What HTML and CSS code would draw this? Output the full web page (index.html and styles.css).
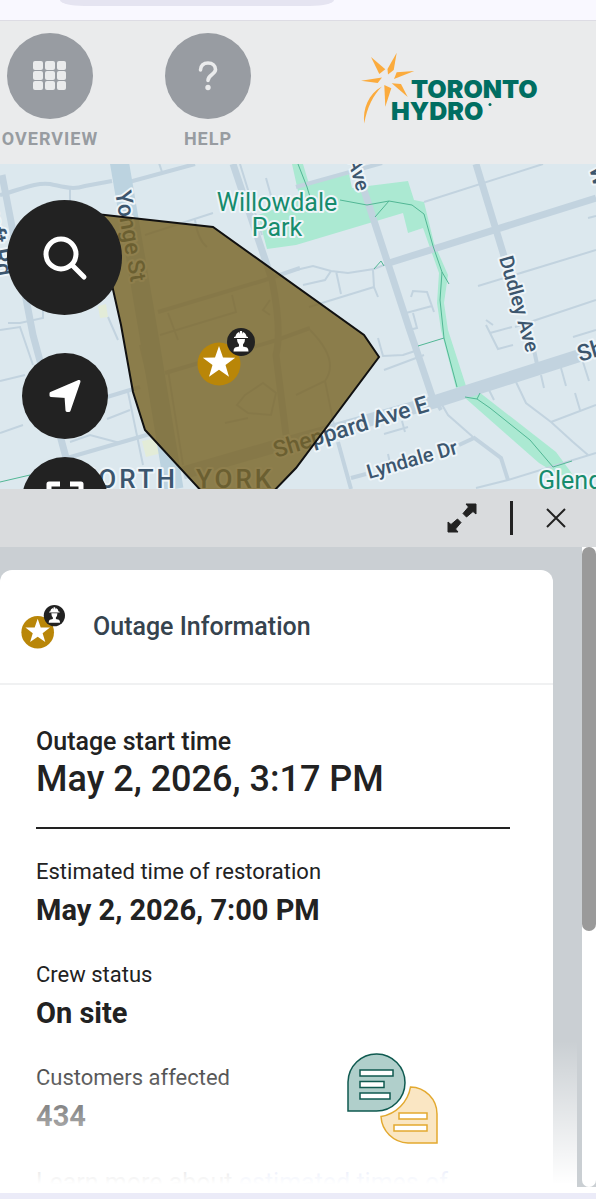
FILE: index.html
```
<!DOCTYPE html>
<html lang="en">
<head>
<meta charset="UTF-8">
<meta name="viewport" content="width=device-width, initial-scale=1.0">
<title>Outage Map</title>
<link rel="stylesheet" href="styles.css">
</head>
<body>
    <!-- shared icons -->
    <svg class="icon-defs" aria-hidden="true">
        <symbol id="outage-marker" viewBox="0 0 58 58">
            <circle cx="22" cy="36" r="21.5" fill="#b98608"/>
            <path d="M22 18L26 29.5L38.2 29.7L28.5 37.1L32 48.8L22 41.8L12 48.8L15.5 37.1L5.8 29.7L18 29.5Z" fill="#fff"/>
            <circle cx="44" cy="14" r="14" fill="#222"/>
            <path d="M38.500 8.500Q39 5 42 4L42.500 6L43 3H45L45.500 6L46 4Q49 5 49.500 8.500L51 9V10H37V9Z" fill="#fff"/>
            <path d="M40 11H48Q48 15 46 16.500V18.500L50 19.500Q51.500 20.500 51.500 23.500H36.500Q36.500 20.500 38 19.500L42 18.500V16.500Q40 15 40 11Z" fill="#fff"/>
        </symbol>
    </svg>

    <div class="browser-bar"><div class="address"></div></div>

    <header>
        <nav>
            <button class="nav-item">
                <span class="nav-icon">
                    <svg width="34" height="30" viewBox="0 0 34 30" fill="#eaebec">
                        <rect x="0" y="0" width="10" height="9" rx="2"/><rect x="12" y="0" width="10" height="9" rx="2"/><rect x="24" y="0" width="9" height="9" rx="2"/>
                        <rect x="0" y="10" width="10" height="9" rx="2"/><rect x="12" y="10" width="10" height="9" rx="2"/><rect x="24" y="10" width="9" height="9" rx="2"/>
                        <rect x="0" y="20" width="10" height="9" rx="2"/><rect x="12" y="20" width="10" height="9" rx="2"/><rect x="24" y="20" width="9" height="9" rx="2"/>
                    </svg>
                </span>
                OVERVIEW
            </button>
            <button class="nav-item">
                <span class="nav-icon">
                    <svg width="20" height="30" viewBox="0 0 20 30">
                        <path d="M2.500 9C2.500 4.500 5.500 2 10 2C14.500 2 17.500 4.500 17.500 8.500C17.500 13.500 10 13.500 10 19.500" fill="none" stroke="#eaebec" stroke-width="3.600" stroke-linecap="round"/>
                        <circle cx="10" cy="26.500" r="2.700" fill="#eaebec"/>
                    </svg>
                </span>
                HELP
            </button>
        </nav>
        <a href="#" class="logo" aria-label="Toronto Hydro">
            <svg width="184" height="74" viewBox="360 51 184 74">
                <g fill="#fbab3d">
                    <path d="M371 57L385.300 69.300L379.300 74Z"/>
                    <path d="M396.700 52.700L393.700 70L388 74.500L387.500 69Z"/>
                    <path d="M414.300 71L394 79L396.700 72.300Z"/>
                    <path d="M407.700 97L391.700 83.300L401 84Z"/>
                    <path d="M385.300 106.700L384.300 85L391.300 88.300Z"/>
                    <path d="M361 80.700L382 77.500L377.700 83Z"/>
                    <path d="M364.300 123.500C362.500 109 368.500 93.500 382 86.500C373.500 95 367 107 364.300 123.500Z"/>
                </g>
                <g class="logo-text">
                    <text x="411" y="98">TORONTO</text>
                    <text x="391" y="120">HYDRO</text>
                </g>
                <circle cx="490" cy="104.500" r="1.500" fill="#006e62"/>
            </svg>
        </a>
    </header>

    <main class="map">
        <svg class="map-canvas" viewBox="0 164 596 325" preserveAspectRatio="xMinYMin slice">
            <!-- parks -->
            <g fill="#abe9d2">
                <path d="M292 164H303L309 184L349 174L352 188L408 181L414 200L424 202L434 243L448 275L444 303L448 330L466 386L456 388L441 330L437 303L439 273L423 228L408 233L403 213L296 245L267 249L258 215L300 200Z"/>
                <path d="M464 397L479 392L556 452L573 475H559L539 463Z"/>
            </g>
            <path d="M142 441L158 438L162 453L146 457Z M98 306L106 304L108 317L100 318Z" fill="#e3ecd8"/>

            <!-- roads -->
            <g class="road minor">
                <path d="M70 189V210M158 160L162 172M145 235L213 213M195 220Q198 240 207 247M266 178L273 203M240 164L262 235"/>
                <path d="M424 202L543 164M303 285L325 280L331 271M296 270L313 266L331 271L348 273L374 269L389 263M373 270L374 287L378 297M374 287L309 307M336 271L341 294"/>
                <path d="M411 297L413 291L427 292L434 312M406 313L432 306M413 313L417 328L409 330M478 286L596 250M515 327L596 300M493 325L486 320M588 218L596 216"/>
                <path d="M441 403L448 415L473 437M516 382L526 403L551 422L573 442L588 455M551 422L596 405M508 480L596 453M476 488L508 480"/>
                <path d="M541 375L544 388M561 368L566 386M583 362L589 381M575 393L580 410M489 390L494 400M486 325L498 349L513 345M490 333L512 327M573 337L596 330"/>
                <path d="M378 338L383 356L403 355L418 350M384 370L424 355M384 434L408 427M402 421L405 432M388 454L391 468"/>
                <path d="M0 381L25 375M0 433L23 425M0 330L20 327L33 365M8 323H20L43 318L43 308M128 392L143 465M108 317L118 340M70 442L90 435L120 443M107 419L130 410"/>
                <path d="M168 313L178 340M232 295L236 312L160 335M245 395L263 383L276 393L271 415L248 413L237 405ZM225 423L248 418M270 300L263 310L270 315M310 330Q340 360 325 381L296 395M325 381L337 440M160 430L140 345M168 370L183 465"/>
            </g>
            <g class="road street">
                <path d="M0 195C20 190 35 182 50 184C65 187 72 190 85 186L112 181M129 182L195 164M296 187L382 163M158 312L265 280L300 268M165 373L277 340L310 328M107 397L140 387M67 458L150 434"/>
                <path d="M434 398L441 410M473 437L501 458L508 480M459 445L474 438M338 442L351 489M351 478L366 474M534 350L537 364"/>
            </g>
            <g class="road avenue">
                <path d="M2 175L33 335L72 480M233 164L272 280Q282 330 276 355L286 435M362 184L409 328L434 402M389 263L596 198M476 164L504 256"/>
            </g>
            <path class="road major" d="M183 473L283 444L434 402L600 349"/>
            <path class="road highway" d="M119 160L148 330L174 489"/>

            <g class="trail">
                <path d="M298 164L307 187L311 200M340 200L367 205L389 201L412 205L424 214L433 246L442 272L449 284M442 272L440 300L444 338L457 387M375 217L389 201M418 346L444 338M374 269L381 261L384 266"/>
                <path d="M465 397L477 399L480 393M477 399L490 408L530 440L553 467L572 461M0 482L30 475"/>
            </g>

            <!-- labels -->
            <g class="label">
                <text class="street-name" transform="translate(115 192) rotate(80)">Yonge St</text>
                <text class="street-name" transform="translate(-3 277) rotate(80)" text-anchor="end">Bancroft Rd</text>
                <text class="street-name" transform="translate(276 458) rotate(-17)">Sheppard Ave E</text>
                <text class="street-name" transform="translate(580 362) rotate(-17)">Sheppard</text>
                <text class="street-name" transform="translate(589 168) rotate(75)">W</text>
                <text class="small-street" transform="translate(499 258) rotate(74)">Dudley Ave</text>
                <text class="small-street" transform="translate(357 192) rotate(74)" text-anchor="end">Kenneth Ave</text>
                <text class="small-street" transform="translate(369 479) rotate(-16)">Lyndale Dr</text>
                <text class="district" x="178" y="488" text-anchor="end">NORTH</text>
                <text class="district" x="196" y="488">YORK</text>
                <text class="park-name" x="277" y="211" text-anchor="middle">Willowdale</text>
                <text class="park-name" x="277" y="236" text-anchor="middle">Park</text>
                <text class="park-name" x="538" y="489">Glendora</text>
            </g>

            <!-- outage area -->
            <path class="outage-area" d="M96 214L213 227L364 335L379 357L296 468L270 495L205 495L145 430L133 392L121 325L112 285Z"/>
            <use href="#outage-marker" x="197" y="328" width="58" height="58"/>
        </svg>

        <div class="map-buttons">
            <button class="round search" aria-label="Search">
                <svg width="46" height="46" viewBox="0 0 46 46" fill="none" stroke="#fff">
                    <circle cx="19" cy="19" r="15" stroke-width="5"/>
                    <path d="M30 30L42 42" stroke-width="5" stroke-linecap="round"/>
                </svg>
            </button>
            <button class="round locate" aria-label="My location">
                <svg width="34" height="34" viewBox="0 0 34 34">
                    <path d="M31 2.500L3 14.500V16.500L18 17.500L19 31.500H21Z" fill="#fff" stroke="#fff" stroke-width="3" stroke-linejoin="round"/>
                </svg>
            </button>
            <button class="round fullscreen" aria-label="Fit to screen">
                <svg width="38" height="38" viewBox="0 0 38 38" fill="none" stroke="#fff" stroke-width="5" stroke-linejoin="round">
                    <path d="M3 14V3H14M24 3H35V14M35 24V35H24M14 35H3V24"/>
                </svg>
            </button>
        </div>
    </main>

    <section class="sheet">
        <div class="toolbar">
            <button aria-label="Expand">
                <svg width="30" height="30" viewBox="0 0 30 30" fill="#222" stroke="#222" stroke-linejoin="round">
                    <path d="M19 1H29V11L26 8.500L19.500 14L16 10.500L21.500 4Z"/>
                    <path d="M11 29H1V19L4 21.500L10.500 16L14 19.500L8.500 26Z"/>
                </svg>
            </button>
            <span class="divider"></span>
            <button aria-label="Close">
                <svg width="20" height="20" viewBox="0 0 20 20" stroke="#222" stroke-width="2">
                    <path d="M1 1L19 19M19 1L1 19"/>
                </svg>
            </button>
        </div>

        <div class="sheet-body">
            <div class="content">
                <article class="card">
                    <div class="card-head">
                        <svg width="44" height="44"><use href="#outage-marker"/></svg>
                        <h1>Outage Information</h1>
                    </div>
                    <div class="card-body">
                        <dl class="start">
                            <dt>Outage start time</dt>
                            <dd>May 2, 2026, 3:17 PM</dd>
                        </dl>
                        <dl class="details">
                            <dt>Estimated time of restoration</dt>
                            <dd>May 2, 2026, 7:00 PM</dd>
                            <dt>Crew status</dt>
                            <dd>On site</dd>
                            <dt>Customers affected</dt>
                            <dd>434</dd>
                        </dl>
                        <p class="learn">Learn more about <a href="#">estimated times of restoration</a></p>
                    </div>
                </article>
                <div class="fade"></div>
            </div>
            <div class="scrollbar"><div class="thumb"></div></div>
            <button class="chat" aria-label="Feedback">
                <svg width="92" height="92" viewBox="0 0 92 92" stroke-width="1.500">
                    <path d="M1 58V29A28.500 28.500 0 1 1 29.500 58Z" fill="#b0cfcb" stroke="#0f5a50"/>
                    <g fill="#fff" stroke="#0f5a50">
                        <rect x="13" y="17" width="33" height="6"/>
                        <rect x="13" y="28.500" width="24" height="6"/>
                        <rect x="13" y="40" width="30" height="6"/>
                    </g>
                    <path d="M63.500 34A27 27 0 0 1 90 61V90H61A28 28 0 0 1 34 63.500A36 36 0 0 0 63.500 34Z" fill="#fae6c3" stroke="#e3a92f"/>
                    <g fill="#fff" stroke="#e3a92f">
                        <rect x="52" y="60" width="28" height="6"/>
                        <rect x="47" y="72" width="33" height="6"/>
                    </g>
                </svg>
            </button>
        </div>
    </section>
    <div class="bottom-bar"></div>
</body>
</html>
```
FILE: styles.css
```
* {
    box-sizing: border-box;
}
body {
    display: flex;
    flex-direction: column;
    height: 100vh;
    margin: 0;
    font-family: Roboto, "Liberation Sans", sans-serif;
    color: #222;
    background-color: #fff;
    overflow: hidden;
}
button {
    padding: 0;
    border: none;
    background: none;
    font-family: inherit;
    cursor: pointer;
}
svg {
    display: block;
}
.icon-defs {
    position: absolute;
    width: 0;
    height: 0;
}

/* top */
.browser-bar {
    flex: 0 0 21px;
    background-color: #f9f8ff;
    border-bottom: 1px solid #dddce4;
}
.address {
    width: 46%;
    height: 6px;
    margin-left: 60px;
    border-radius: 0 0 24px 24px / 0 0 6px 6px;
    background-color: #e5e4f1;
}
header {
    flex: 0 0 143px;
    display: flex;
    justify-content: space-between;
    align-items: flex-start;
    padding: 12px 52px 0 2px;
    background-color: #eaebec;
}
nav {
    display: flex;
    gap: 62px;
}
.nav-item {
    width: 96px;
    display: flex;
    flex-direction: column;
    align-items: center;
    gap: 9px;
    font-size: 18px;
    line-height: 22px;
    font-weight: bold;
    letter-spacing: 1px;
    color: #989ca1;
}
.nav-icon {
    width: 86px;
    height: 86px;
    border-radius: 50%;
    background-color: #989ca2;
    display: flex;
    align-items: center;
    justify-content: center;
}
.logo {
    margin-top: 18px;
}
.logo-text {
    font-family: Inter, sans-serif;
    font-size: 25px;
    font-weight: 900;
    fill: #006e62;
}

/* map */
.map {
    position: relative;
    flex: 0 0 325px;
    overflow: hidden;
    background-color: #dce8ee;
}
.map-canvas {
    width: 100%;
    height: 100%;
}
.road {
    fill: none;
    stroke: #c2d3df;
}
.minor {
    stroke-width: 2;
}
.street {
    stroke-width: 4;
}
.avenue {
    stroke-width: 7;
}
.major {
    stroke-width: 13;
}
.highway {
    stroke: #bcd3e0;
    stroke-width: 19;
}
.trail {
    fill: none;
    stroke: #52b795;
    stroke-width: 1;
}
.label {
    fill: #3c566e;
    stroke: #eef5f9;
    stroke-width: 4;
    stroke-linejoin: round;
    paint-order: stroke;
    font-weight: 500;
}
.street-name {
    font-size: 23px;
}
.small-street {
    font-size: 20px;
}
.park-name {
    font-size: 25px;
    font-weight: 400;
    fill: #168c6d;
}
.district {
    font-size: 26px;
    letter-spacing: 3px;
}
.outage-area {
    fill: #776222;
    fill-opacity: 0.8;
    stroke: #111;
    stroke-width: 2;
}
.map-buttons {
    position: absolute;
    top: 36px;
    left: 7px;
    display: flex;
    flex-direction: column;
    align-items: center;
    gap: 18px;
}
.round {
    width: 86px;
    height: 86px;
    border-radius: 50%;
    background-color: #222;
    display: flex;
    align-items: center;
    justify-content: center;
}
.search {
    width: 115px;
    height: 115px;
    margin-bottom: 20px;
}

/* sheet */
.sheet {
    flex: 1;
    min-height: 0;
    display: flex;
    flex-direction: column;
}
.toolbar {
    flex: 0 0 58px;
    display: flex;
    justify-content: flex-end;
    align-items: center;
    gap: 33px;
    padding-right: 30px;
    background-color: #d9dbdd;
}
.divider {
    width: 3px;
    height: 34px;
    background-color: #222;
}
.sheet-body {
    position: relative;
    flex: 1;
    min-height: 0;
    display: flex;
    background-color: #cacfd3;
}
.content {
    position: relative;
    flex: 1;
    margin-right: 5px;
    padding: 23px 24px 0 0;
    overflow: hidden;
}
.card {
    min-height: 100%;
    border-radius: 12px;
    background-color: #fff;
}
.card-head {
    display: flex;
    align-items: center;
    gap: 28px;
    height: 115px;
    padding-left: 21px;
    border-bottom: 2px solid #f0f1f2;
}
h1 {
    margin: 0;
    font-size: 25px;
    font-weight: 500;
    color: #36434e;
}
.card-body {
    padding: 41px 43px 0 36px;
}
dl, dd {
    margin: 0;
}
.start {
    padding-bottom: 27px;
    border-bottom: 2px solid #222;
    margin-bottom: 27px;
    font-weight: 500;
}
.start dt {
    font-size: 25px;
    line-height: 32px;
}
.start dd {
    font-size: 36px;
    line-height: 42px;
}
.details dt {
    font-size: 22px;
    line-height: 32px;
}
.details dd {
    margin-bottom: 27px;
    font-size: 29px;
    line-height: 44px;
    font-weight: bold;
}
.learn {
    margin: 0;
    font-size: 25px;
    line-height: 36px;
}
.learn a {
    color: #3b62d8;
    text-decoration: none;
}
.fade {
    position: absolute;
    left: 0;
    right: 0;
    bottom: 0;
    height: 146px;
    background: linear-gradient(rgba(255, 255, 255, 0), #fff 98%);
}
.scrollbar {
    width: 14px;
    border-radius: 0 0 7px 7px;
    background-color: #fff;
}
.thumb {
    height: 60%;
    border-radius: 7px;
    background-color: #9a9a9a;
}
.chat {
    position: absolute;
    right: 157px;
    bottom: 42px;
}
.bottom-bar {
    flex: 0 0 12px;
    border-bottom: 6px solid #ebebf8;
}
```
